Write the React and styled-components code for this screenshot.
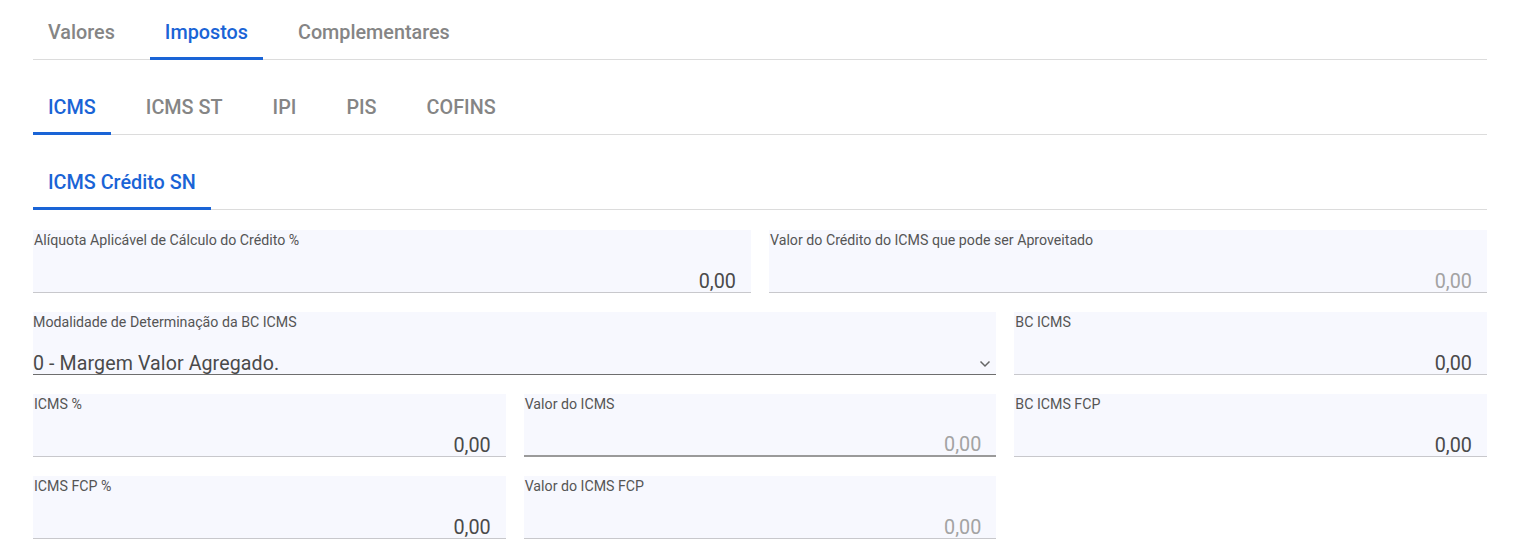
import React from "react";
import styled, { createGlobalStyle } from "styled-components";

const Global = createGlobalStyle`
  html, body { margin: 0; padding: 0; background: #fff; }
  body { font-family: Roboto, "Liberation Sans", sans-serif; }
  * { box-sizing: border-box; }
`;

const Page = styled.div`
  padding: 0 31px 0 33px;
  width: 1518px;
`;

const TabBar = styled.div`
  display: flex;
  gap: 20px;
  border-bottom: 1px solid #dcdcdc;
  height: ${(p) => p.$h}px;
  align-items: stretch;
`;

const Tab = styled.div`
  padding: 8px 15px 0;
  display: flex;
  align-items: center;
  font-size: 19.8px;
  font-weight: 500;
  color: ${(p) => (p.$active ? "#1a64d6" : "#858585")};
  border-bottom: 3px solid ${(p) => (p.$active ? "#1a64d6" : "transparent")};
  margin-bottom: -1px;
`;

const Grid = styled.div`
  display: grid;
  grid-template-columns: repeat(6, 1fr);
  column-gap: 18px;
  row-gap: 19px;
  margin-top: 20px;
`;

const Field = styled.div`
  grid-column: span ${(p) => p.$span};
  height: 63px;
  background: #f7f8fe;
  border-bottom: ${(p) => (p.$strong ? "2px solid #9a9a9a" : "1px solid #c8c8cc")};
  display: flex;
  flex-direction: column;
  justify-content: space-between;
  padding: 2px 15px 0 1px;
`;

const SelectField = styled(Field)`
  border-bottom: 1px solid #6e6e6e;
  padding-right: 5px;
  padding-left: 0;
`;

const Label = styled.div`
  font-size: 14.2px;
  color: #555;
  line-height: 17px;
`;

const Value = styled.div`
  font-size: 19.8px;
  text-align: right;
  color: ${(p) => (p.$disabled ? "#a3a3a3" : "#4a4a4a")};
  line-height: 20px;
`;

const SelectRow = styled.div`
  display: flex;
  align-items: center;
  justify-content: space-between;
  font-size: 19.6px;
  color: #4a4a4a;
  line-height: 20px;
  letter-spacing: 0.1px;
`;

const Chevron = () => (
  <svg width="12" height="8" viewBox="0 0 12 8" fill="none">
    <path d="M1.5 1.5L6 6L10.5 1.5" stroke="#666" strokeWidth="1.5" />
  </svg>
);

const NumberField = ({ span, label, value = "0,00", disabled, strong }) => (
  <Field $span={span} $strong={strong}>
    <Label>{label}</Label>
    <Value $disabled={disabled}>{value}</Value>
  </Field>
);

const Spacer = styled.div`
  height: ${(p) => p.$h}px;
`;

export default function App() {
  return (
    <>
      <Global />
      <Page>
        <TabBar $h={60}>
          <Tab>Valores</Tab>
          <Tab $active>Impostos</Tab>
          <Tab>Complementares</Tab>
        </TabBar>
        <Spacer $h={15} />
        <TabBar $h={60}>
          <Tab $active>ICMS</Tab>
          <Tab>ICMS ST</Tab>
          <Tab>IPI</Tab>
          <Tab>PIS</Tab>
          <Tab>COFINS</Tab>
        </TabBar>
        <Spacer $h={15} />
        <TabBar $h={60}>
          <Tab $active>ICMS Crédito SN</Tab>
        </TabBar>
        <Grid>
          <NumberField span={3} label="Alíquota Aplicável de Cálculo do Crédito %" />
          <NumberField span={3} label="Valor do Crédito do ICMS que pode ser Aproveitado" disabled />
          <SelectField $span={4}>
            <Label>Modalidade de Determinação da BC ICMS</Label>
            <SelectRow>
              <span>0 - Margem Valor Agregado.</span>
              <Chevron />
            </SelectRow>
          </SelectField>
          <NumberField span={2} label="BC ICMS" />
          <NumberField span={2} label="ICMS %" />
          <NumberField span={2} label="Valor do ICMS" disabled strong />
          <NumberField span={2} label="BC ICMS FCP" />
          <NumberField span={2} label="ICMS FCP %" />
          <NumberField span={2} label="Valor do ICMS FCP" disabled />
        </Grid>
      </Page>
    </>
  );
}
